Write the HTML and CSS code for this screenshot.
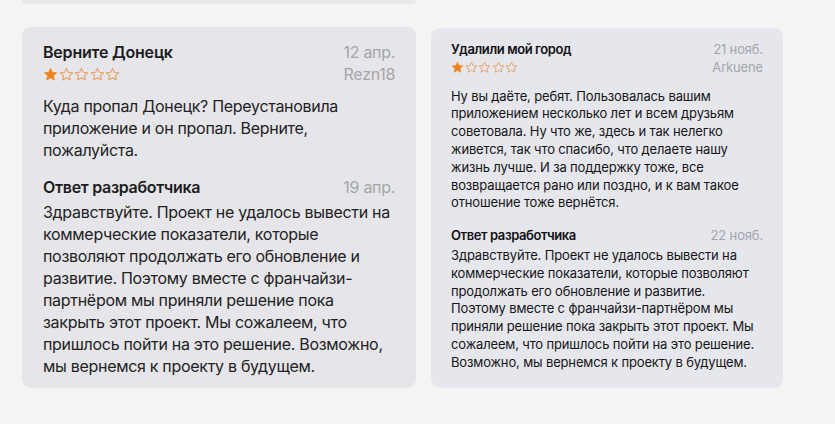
FILE: index.html
```html
<!DOCTYPE html>
<html lang="ru">
<head>
<meta charset="utf-8">
<link rel="stylesheet" href="styles.css">
</head>
<body>
<div class="page">
  <div class="prev-card"></div>
  <div class="row">
    <article class="card card-big">
      <header class="head">
        <div class="head-left">
          <div class="title">Верните Донецк</div>
          <div class="stars">
            <svg class="star" viewBox="0 0 20 20"><path class="on" d="M10 1.8l2.4 5.3 5.8.6-4.3 3.9 1.2 5.7L10 14.4l-5.1 2.9 1.2-5.7-4.3-3.9 5.8-.6z"/></svg>
            <svg class="star" viewBox="0 0 20 20"><path class="off" d="M10 1.8l2.4 5.3 5.8.6-4.3 3.9 1.2 5.7L10 14.4l-5.1 2.9 1.2-5.7-4.3-3.9 5.8-.6z"/></svg>
            <svg class="star" viewBox="0 0 20 20"><path class="off" d="M10 1.8l2.4 5.3 5.8.6-4.3 3.9 1.2 5.7L10 14.4l-5.1 2.9 1.2-5.7-4.3-3.9 5.8-.6z"/></svg>
            <svg class="star" viewBox="0 0 20 20"><path class="off" d="M10 1.8l2.4 5.3 5.8.6-4.3 3.9 1.2 5.7L10 14.4l-5.1 2.9 1.2-5.7-4.3-3.9 5.8-.6z"/></svg>
            <svg class="star" viewBox="0 0 20 20"><path class="off" d="M10 1.8l2.4 5.3 5.8.6-4.3 3.9 1.2 5.7L10 14.4l-5.1 2.9 1.2-5.7-4.3-3.9 5.8-.6z"/></svg>
          </div>
        </div>
        <div class="head-right">
          <div class="meta">12 апр.</div>
          <div class="meta">Rezn18</div>
        </div>
      </header>
      <p class="body">Куда пропал Донецк? Переустановила<br>приложение и он пропал. Верните,<br>пожалуйста.</p>
      <div class="reply-head">
        <div class="reply-title">Ответ разработчика</div>
        <div class="meta">19 апр.</div>
      </div>
      <p class="reply">Здравствуйте. Проект не удалось вывести на<br>коммерческие показатели, которые<br>позволяют продолжать его обновление и<br>развитие. Поэтому вместе с франчайзи-<br>партнёром мы приняли решение пока<br>закрыть этот проект. Мы сожалеем, что<br>пришлось пойти на это решение. Возможно,<br>мы вернемся к проекту в будущем.</p>
    </article>
    <article class="card card-small">
      <header class="head">
        <div class="head-left">
          <div class="title">Удалили мой город</div>
          <div class="stars">
            <svg class="star" viewBox="0 0 20 20"><path class="on" d="M10 1.8l2.4 5.3 5.8.6-4.3 3.9 1.2 5.7L10 14.4l-5.1 2.9 1.2-5.7-4.3-3.9 5.8-.6z"/></svg>
            <svg class="star" viewBox="0 0 20 20"><path class="off" d="M10 1.8l2.4 5.3 5.8.6-4.3 3.9 1.2 5.7L10 14.4l-5.1 2.9 1.2-5.7-4.3-3.9 5.8-.6z"/></svg>
            <svg class="star" viewBox="0 0 20 20"><path class="off" d="M10 1.8l2.4 5.3 5.8.6-4.3 3.9 1.2 5.7L10 14.4l-5.1 2.9 1.2-5.7-4.3-3.9 5.8-.6z"/></svg>
            <svg class="star" viewBox="0 0 20 20"><path class="off" d="M10 1.8l2.4 5.3 5.8.6-4.3 3.9 1.2 5.7L10 14.4l-5.1 2.9 1.2-5.7-4.3-3.9 5.8-.6z"/></svg>
            <svg class="star" viewBox="0 0 20 20"><path class="off" d="M10 1.8l2.4 5.3 5.8.6-4.3 3.9 1.2 5.7L10 14.4l-5.1 2.9 1.2-5.7-4.3-3.9 5.8-.6z"/></svg>
          </div>
        </div>
        <div class="head-right">
          <div class="meta">21 нояб.</div>
          <div class="meta">Arkuene</div>
        </div>
      </header>
      <p class="body">Ну вы даёте, ребят. Пользовалась вашим<br>приложением несколько лет и всем друзьям<br>советовала. Ну что же, здесь и так нелегко<br>живется, так что спасибо, что делаете нашу<br>жизнь лучше. И за поддержку тоже, все<br>возвращается рано или поздно, и к вам такое<br>отношение тоже вернётся.</p>
      <div class="reply-head">
        <div class="reply-title">Ответ разработчика</div>
        <div class="meta">22 нояб.</div>
      </div>
      <p class="reply">Здравствуйте. Проект не удалось вывести на<br>коммерческие показатели, которые позволяют<br>продолжать его обновление и развитие.<br>Поэтому вместе с франчайзи-партнёром мы<br>приняли решение пока закрыть этот проект. Мы<br>сожалеем, что пришлось пойти на это решение.<br>Возможно, мы вернемся к проекту в будущем.</p>
    </article>
  </div>
</div>
</body>
</html>
```

FILE: styles.css
```css
html, body {
  margin: 0;
  padding: 0;
}
body {
  background: #f4f4f4;
  font-family: Inter, "Noto Sans", sans-serif;
  color: #1d1d1f;
}
.page {
  padding-left: 22px;
}
.prev-card {
  width: 394px;
  height: 4px;
  background: #e8e8ea;
  border-radius: 0 0 8px 8px;
}
.row {
  display: flex;
  align-items: flex-start;
  gap: 15px;
  margin-top: 23px;
}
.card {
  box-sizing: border-box;
  border-radius: 9px;
  white-space: nowrap;
}
.card-big {
  width: 394px;
  height: 361px;
  background: #e6e6ea;
  padding: 14px 21px 0 21px;
  font-size: 16px;
  line-height: 22px;
  letter-spacing: -0.3px;
}
.card-small {
  width: 352px;
  height: 360px;
  margin-top: 1px;
  background: #e6e6ed;
  padding: 13px 20px 0 20px;
  font-size: 13px;
  line-height: 17.8px;
  letter-spacing: -0.15px;
}
.head {
  display: flex;
  justify-content: space-between;
}
.head-right {
  text-align: right;
}
.title, .reply-title {
  font-weight: 600;
  color: #1c1c1e;
}
.card-big .title {
  letter-spacing: -0.2px;
}
.card-small .title, .card-small .reply-title {
  font-weight: 600;
  letter-spacing: -0.4px;
  color: #111113;
}
.meta {
  color: #a4a4a9;
}
.stars {
  display: flex;
  align-items: center;
}
.card-big .stars {
  height: 22px;
  gap: 0.5px;
}
.card-big .star {
  width: 15px;
  height: 15px;
}
.card-small .stars {
  height: 17.8px;
  gap: 0.5px;
}
.card-small .star {
  width: 13px;
  height: 13px;
}
.star .on {
  fill: #f0821e;
  stroke: #f0821e;
  stroke-width: 1;
  stroke-linejoin: round;
}
.star .off {
  fill: none;
  stroke: #e99e5f;
  stroke-width: 1.4;
  stroke-linejoin: round;
}
.body, .reply {
  margin: 0;
  color: #222224;
}
.card-small .body, .card-small .reply {
  color: #151517;
}
.card-big .body {
  margin-top: 10px;
}
.card-big .reply-head {
  margin-top: 15px;
}
.card-big .reply {
  margin-top: 3px;
}
.card-small .body {
  margin-top: 11px;
}
.card-small .reply-head {
  margin-top: 15px;
}
.card-small .reply {
  margin-top: 2px;
}
.reply-head {
  display: flex;
  justify-content: space-between;
}
```
